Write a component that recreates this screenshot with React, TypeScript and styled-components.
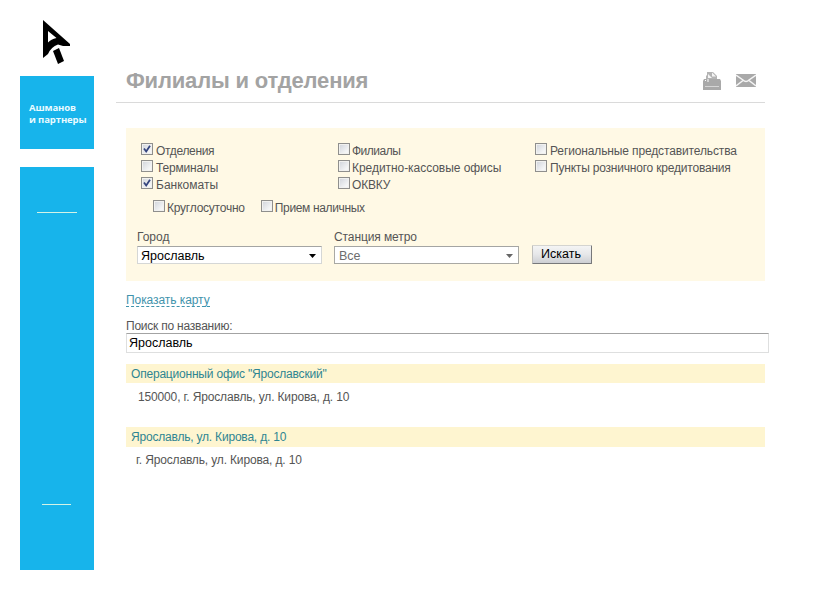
import React from "react";
import styled, { createGlobalStyle } from "styled-components";

const GlobalStyle = createGlobalStyle`
  * { box-sizing: border-box; }
  body {
    margin: 0;
    background: #fff;
    color: #555;
    font: 12px/17px "Liberation Sans", Arial, sans-serif;
  }
`;

const Page = styled.div`
  display: flex;
  width: 822px;
  height: 595px;
  padding-left: 20px;
  overflow: hidden;
`;

const Sidebar = styled.aside`
  display: flex;
  flex-direction: column;
  width: 74px;
  padding-top: 20px;
`;

const Logo = styled.svg`
  width: 30px;
  height: 46px;
  margin: 0 0 10px 22px;
`;

const Brand = styled.div`
  height: 73px;
  margin-bottom: 18px;
  padding: 25px 0 0 9px;
  background: #17b4eb;
  color: #e9fbff;
  font: 700 9.5px/13px "Open Sans", "Noto Sans", sans-serif;
  letter-spacing: -0.1px;
  white-space: nowrap;
`;

const BrandLine = styled.div`
  height: 12px;
`;

const Stripe = styled.div`
  display: flex;
  flex-direction: column;
  justify-content: space-between;
  height: 403px;
  padding: 45px 0 65px 17px;
  background: #17b4eb;
`;

const Dash = styled.span<{ $width: number; $indent?: number }>`
  width: ${(p) => p.$width}px;
  height: 1px;
  margin-left: ${(p) => p.$indent ?? 0}px;
  background: #d3f3e6;
`;

const Main = styled.main`
  width: 653px;
  margin-left: 22px;
`;

const Header = styled.header`
  display: flex;
  align-items: flex-start;
  width: 649px;
  height: 103px;
  padding: 68px 9px 0 10px;
  border-bottom: 1px solid #dadada;
`;

const Title = styled.h1`
  flex: 1;
  margin: 0;
  color: #a3a3a3;
  font-size: 22px;
  line-height: 26px;
  letter-spacing: -0.18px;
`;

const HeaderIcon = styled.svg`
  width: 20px;
  height: 20px;
  margin: 3px 0 0 14px;
`;

const Content = styled.div`
  margin-left: 10px;
`;

const FilterPanel = styled.form`
  width: 639px;
  height: 153px;
  margin-top: 25px;
  padding: 14px 0 0 11px;
  background: #fff9e5;
`;

const KindGrid = styled.div`
  display: grid;
  grid-template-columns: repeat(3, 197px);
  grid-template-rows: repeat(3, 17px);
  grid-auto-flow: column;
  padding-left: 4px;
`;

const OptionRow = styled.div`
  display: flex;
  gap: 16px;
  margin-top: 6px;
  padding-left: 16px;
`;

const Option = styled.label<{ $spacing: number; $gap: number }>`
  display: flex;
  gap: ${(p) => p.$gap}px;
  height: 17px;
  line-height: 18px;
  letter-spacing: ${(p) => p.$spacing}px;
  white-space: nowrap;
`;

const Box = styled.span`
  display: flex;
  flex: none;
  width: 12px;
  height: 12px;
  margin-top: 1px;
  border: 1px solid #8f8f8d;
  background: linear-gradient(135deg, #cfd3da, #f4f5f6 75%);
  box-shadow: inset 0 0 0 1px #f1f1ef;
`;

const Tick = styled.svg`
  width: 10px;
  height: 10px;
`;

const Fields = styled.div`
  display: flex;
  align-items: flex-end;
  margin-top: 13px;
  gap: 12px;
`;

const Field = styled.div<{ $spacing?: number }>`
  width: 185px;
  letter-spacing: ${(p) => p.$spacing ?? 0}px;
`;

const Select = styled.div<{ $muted?: boolean }>`
  display: flex;
  align-items: center;
  justify-content: space-between;
  height: 18px;
  padding: 2px 5px 0 ${(p) => (p.$muted ? 4 : 3)}px;
  border: 1px solid ${(p) => (p.$muted ? "#a9a9a4" : "#d5d7d6")};
  border-top-color: #a4a5a3;
  background: #fff;
  color: ${(p) => (p.$muted ? "#6d6d6d" : "#000")};
  font-size: 12.5px;
  line-height: 18px;
  letter-spacing: 0;
`;

const Caret = styled.svg`
  width: 7px;
  height: 4px;
`;

const SearchButton = styled.button`
  width: 60px;
  height: 19px;
  margin: 0 0 0 1px;
  padding: 0 2px 0 0;
  border: 1px solid #77787a;
  border-top-color: #d4d4d0;
  border-left-color: #c0c0bd;
  border-radius: 1px;
  background: linear-gradient(#f4f4f4, #e6e7e9 50%, #cdcfd3);
  color: #000;
  font: 12.5px/17px "Liberation Sans", Arial, sans-serif;
`;

const MapLink = styled.a`
  display: block;
  width: 84px;
  height: 15px;
  margin-top: 11px;
  border-bottom: 1px dashed #3f93ac;
  color: #3f93ac;
  letter-spacing: -0.07px;
  white-space: nowrap;
`;

const SearchLabel = styled.label`
  display: block;
  height: 15px;
  margin-top: 11px;
  letter-spacing: -0.22px;
`;

const NameInput = styled.input`
  display: block;
  width: 643px;
  height: 20px;
  padding: 0 2px;
  border: 1px solid #dedfdf;
  border-top-color: #a3a3a3;
  background: #fff;
  color: #000;
  font: 12.5px "Liberation Sans", Arial, sans-serif;
`;

const Results = styled.div`
  margin-top: 11px;
`;

const Result = styled.section`
  display: flex;
  flex-direction: column;
  justify-content: space-between;
  width: 639px;
  height: 63px;
`;

const ResultName = styled.div<{ $height: number }>`
  height: ${(p) => p.$height}px;
  padding-left: 5px;
  background: #fef5d0;
  color: #2f8592;
  line-height: 20px;
  letter-spacing: -0.2px;
`;

const Address = styled.div<{ $indent: number }>`
  height: 38px;
  padding-left: ${(p) => p.$indent}px;
  letter-spacing: -0.15px;
`;

type CheckProps = { label: string; checked?: boolean; spacing?: number; gap?: number };

const Check = ({ label, checked, spacing = 0, gap = 3 }: CheckProps) => (
  <Option $spacing={spacing} $gap={gap}>
    <Box>
      {checked && (
        <Tick viewBox="0 0 10 10">
          <path d="M2 4.5 4.2 7.5 8 1.8" fill="none" stroke="#35457e" strokeWidth="1.8" />
        </Tick>
      )}
    </Box>
    {label}
  </Option>
);

const kinds: CheckProps[] = [
  { label: "Отделения", checked: true, spacing: -0.33 },
  { label: "Терминалы", spacing: -0.2 },
  { label: "Банкоматы", checked: true },
  { label: "Филиалы", spacing: -0.5, gap: 2 },
  { label: "Кредитно-кассовые офисы", spacing: -0.05, gap: 2 },
  { label: "ОКВКУ", spacing: -0.2, gap: 2 },
  { label: "Региональные представительства", spacing: -0.13 },
  { label: "Пункты розничного кредитования", spacing: -0.2 },
];

const Arrow = ({ color }: { color: string }) => (
  <Caret viewBox="0 0 7 4">
    <path d="M0 0h7L3.5 4z" fill={color} />
  </Caret>
);

export default function App() {
  return (
    <Page>
      <GlobalStyle />
      <Sidebar>
        <Logo viewBox="0 0 30 46">
          <path
            fillRule="evenodd"
            d="M1 0 28 24V26H21L16 24.5Q9 27 6 34L1 38ZM6 11V22.500Q9 19 14.500 18Z"
            fill="#000"
          />
          <path d="M11 31 17 28 22 41 16 44Z" fill="#000" />
        </Logo>
        <Brand>
          <BrandLine>Ашманов</BrandLine>
          <BrandLine>и партнеры</BrandLine>
        </Brand>
        <Stripe>
          <Dash $width={40} />
          <Dash $width={29} $indent={5} />
        </Stripe>
      </Sidebar>
      <Main>
        <Header>
          <Title>Филиалы и отделения</Title>
          <HeaderIcon viewBox="0 0 20 20">
            <path d="M4 8V5l1-1V1h6l4 4v3z" fill="#b4b4b4" />
            <path d="M6 3v4h4zM10 1.500v4h4" fill="#f5f5f5" />
            <path d="M2 8h16l1 2v9H1v-9z" fill="#a9a9a9" />
            <path d="M3 9.500h1M6 8v3" stroke="#fff" />
            <path d="M3 15.500h14" stroke="#d5d5d5" />
          </HeaderIcon>
          <HeaderIcon viewBox="0 0 20 20">
            <path d="M0 3h20v13H0z" fill="#a9a9a9" />
            <path
              d="M0 4l7 5q3 3 6 0l7-5M0 15l7-5.500M20 15l-7-5.500"
              fill="none"
              stroke="#f5f5f5"
              strokeWidth="1.5"
            />
          </HeaderIcon>
        </Header>
        <Content>
          <FilterPanel>
            <KindGrid>
              {kinds.map((kind) => (
                <Check key={kind.label} {...kind} />
              ))}
            </KindGrid>
            <OptionRow>
              <Check label="Круглосуточно" spacing={-0.23} gap={2} />
              <Check label="Прием наличных" spacing={-0.35} gap={2} />
            </OptionRow>
            <Fields>
              <Field>
                Город
                <Select>
                  Ярославль
                  <Arrow color="#000" />
                </Select>
              </Field>
              <Field $spacing={-0.1}>
                Станция метро
                <Select $muted>
                  Все
                  <Arrow color="#666" />
                </Select>
              </Field>
              <SearchButton type="button">Искать</SearchButton>
            </Fields>
          </FilterPanel>
          <MapLink>Показать карту</MapLink>
          <SearchLabel>Поиск по названию:</SearchLabel>
          <NameInput defaultValue="Ярославль" />
          <Results>
            <Result>
              <ResultName $height={19}>Операционный офис "Ярославский"</ResultName>
              <Address $indent={12}>150000, г. Ярославль, ул. Кирова, д. 10</Address>
            </Result>
            <Result>
              <ResultName $height={20}>Ярославль, ул. Кирова, д. 10</ResultName>
              <Address $indent={10}>г. Ярославль, ул. Кирова, д. 10</Address>
            </Result>
          </Results>
        </Content>
      </Main>
    </Page>
  );
}
